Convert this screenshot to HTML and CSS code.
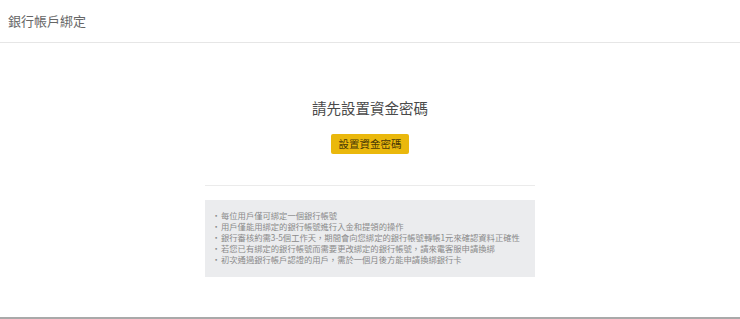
FILE: index.html
```html
<!DOCTYPE html>
<html lang="zh-Hant">
<head>
    <meta charset="UTF-8">
    <meta name="viewport" content="width=device-width, initial-scale=1.0">
    <title>銀行帳戶綁定</title>
    <link rel="stylesheet" href="styles.css">
</head>
<body>

    <div class="page">
        <!-- Page header -->
        <div class="page-header">銀行帳戶綁定</div>

        <!-- Main content -->
        <div class="bind-main">
            <h2 class="bind-title">請先設置資金密碼</h2>
            <button class="button">設置資金密碼</button>

            <div class="divider"></div>

            <!-- Notice box -->
            <ul class="notice">
                <li>每位用戶僅可綁定一個銀行帳號</li>
                <li>用戶僅能用綁定的銀行帳號進行入金和提領的操作</li>
                <li>銀行審核約需3-5個工作天，期間會向您綁定的銀行帳號轉帳1元來確認資料正確性</li>
                <li>若您已有綁定的銀行帳號而需要更改綁定的銀行帳號，請來電客服申請換綁</li>
                <li>初次通過銀行帳戶認證的用戶，需於一個月後方能申請換綁銀行卡</li>
            </ul>
        </div>
    </div>

</body>
</html>
```

FILE: styles.css
```css
/* General body style */
body {
    font-family: "Noto Sans CJK TC", "Noto Sans", sans-serif;
    margin: 0;
    padding: 0;
    background-color: #fff;
    color: #444;
}

/* Page wrapper */
.page {
    min-height: 319px;
    box-sizing: border-box;
    border-bottom: 2px solid #a9a9a9;
}

/* Header */
.page-header {
    height: 42px;
    line-height: 42px;
    padding-left: 8px;
    font-size: 13px;
    color: #666;
    border-bottom: 1px solid #e6e6e6;
}

/* Main column */
.bind-main {
    width: 330px;
    margin: 0 auto;
    padding-top: 55px;
    display: flex;
    flex-direction: column;
    align-items: center;
}

.bind-title {
    font-size: 14.5px;
    font-weight: normal;
    line-height: 20px;
    margin: 0;
    color: #4a4a4a;
}

/* Button styling */
.button {
    margin-top: 16px;
    width: 78px;
    height: 20px;
    padding: 0;
    background-color: #eab80c;
    border: none;
    border-radius: 2px;
    color: #4b3a06;
    font-family: inherit;
    font-size: 10.5px;
    line-height: 20px;
    cursor: pointer;
}

.button:hover {
    background-color: #d9a908;
}

.divider {
    width: 330px;
    height: 1px;
    margin-top: 31px;
    background-color: #ebebeb;
}

/* Notice box */
.notice {
    list-style: none;
    box-sizing: border-box;
    width: 330px;
    margin: 14px 0 0;
    padding: 10px 8px 12px 7px;
    background-color: #ebecee;
    color: #8a8a8a;
    font-size: 8.3px;
    line-height: 11px;
}

.notice li {
    white-space: nowrap;
}

.notice li::before {
    content: "·";
    display: inline-block;
    width: 9px;
}
```
